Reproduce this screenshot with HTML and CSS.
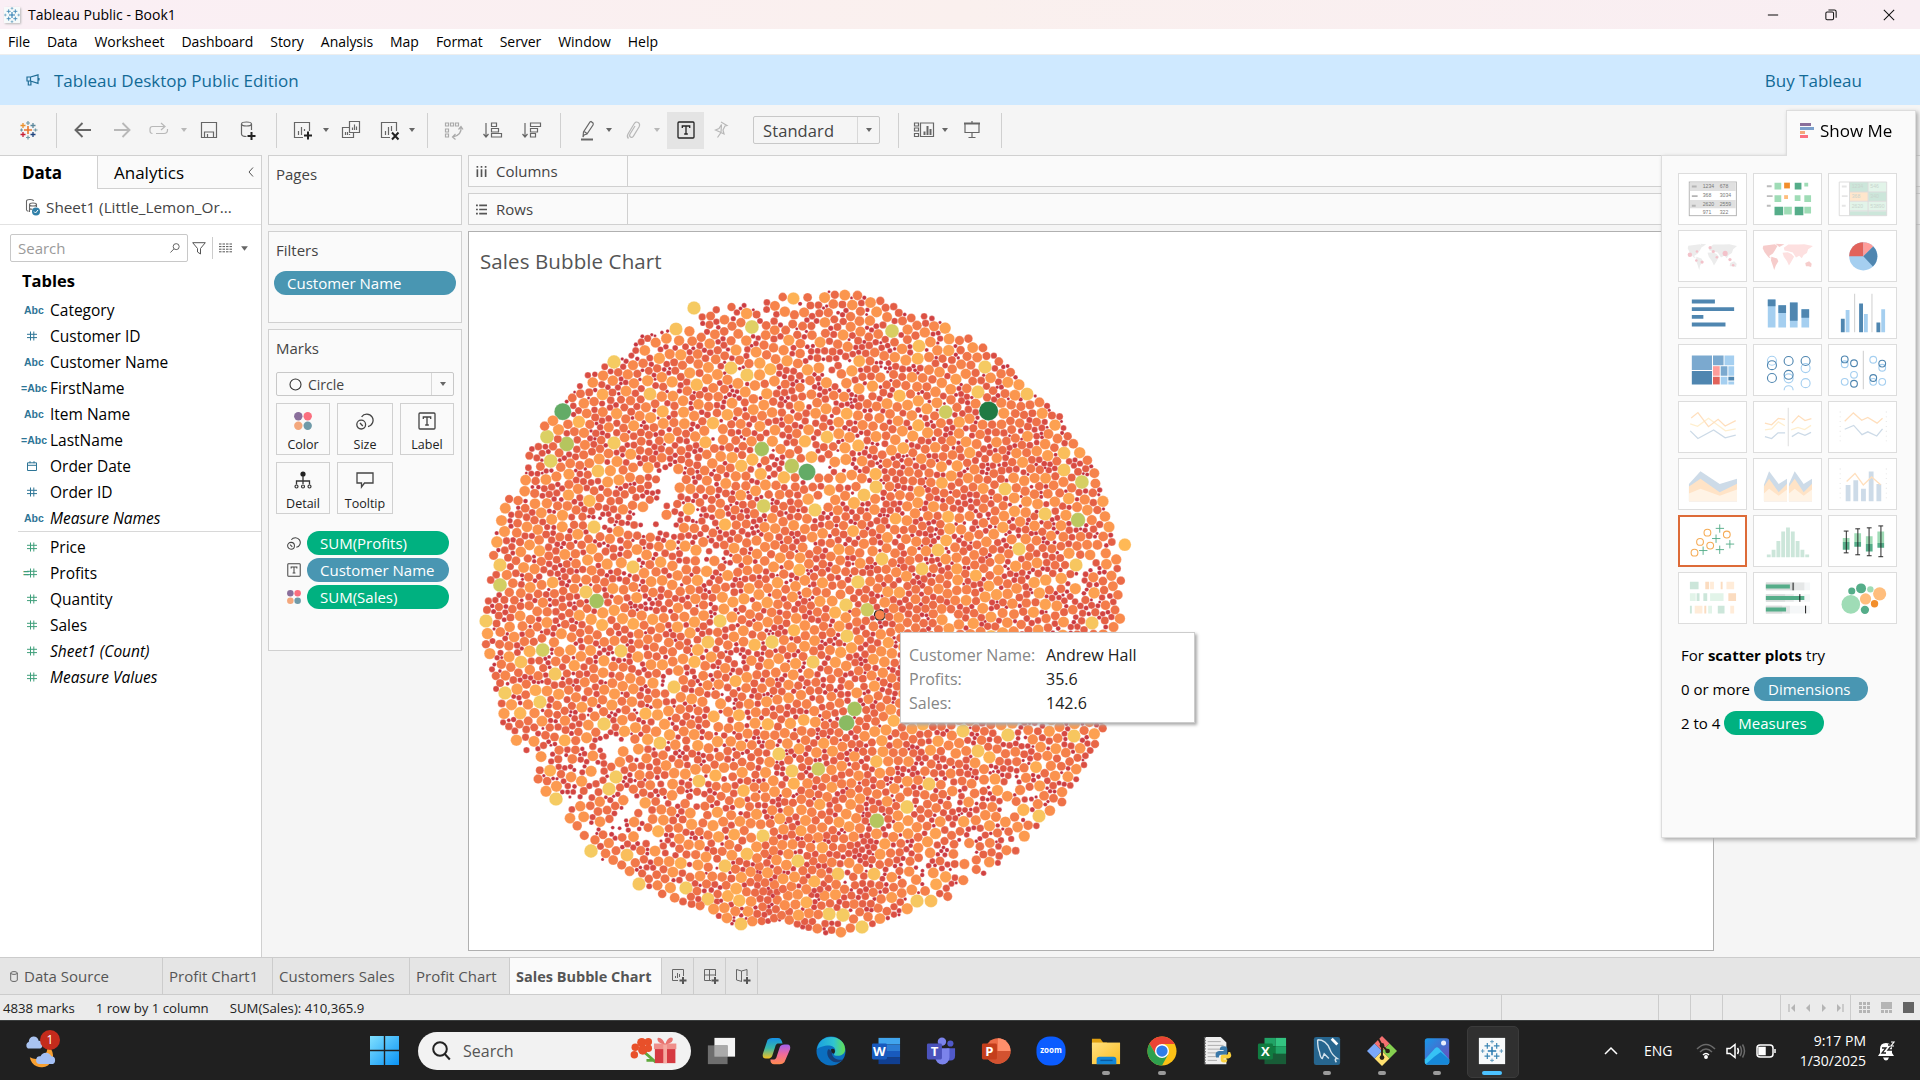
FILE: index.html
```html
<!DOCTYPE html>
<html lang="en">
<head>
<meta charset="utf-8">
<title>Tableau Public - Book1</title>
<link rel="stylesheet" href="styles.css">
</head>
<body>
<svg class="sprite" width="0" height="0">
  <defs>
    <linearGradient id="gWin" x1="0" y1="0" x2="1" y2="1"><stop offset="0" stop-color="#80e0ff"/><stop offset="1" stop-color="#0a93f5"/></linearGradient>
    <linearGradient id="gEdge" x1="0" y1="0" x2="1" y2="0"><stop offset="0" stop-color="#1a9fe0"/><stop offset=".6" stop-color="#30c4d0"/><stop offset="1" stop-color="#63e050"/></linearGradient>
    <linearGradient id="gCopA" x1="0" y1="0" x2="0" y2="1"><stop offset="0" stop-color="#1590e8"/><stop offset=".5" stop-color="#38b8a8"/><stop offset="1" stop-color="#f5c020"/></linearGradient>
    <linearGradient id="gCopB" x1="0" y1="0" x2="0" y2="1"><stop offset="0" stop-color="#a060f0"/><stop offset=".5" stop-color="#f06a9a"/><stop offset="1" stop-color="#ff8a50"/></linearGradient>
    <linearGradient id="gFold" x1="0" y1="0" x2="1" y2="1"><stop offset="0" stop-color="#ffe080"/><stop offset="1" stop-color="#fbbd20"/></linearGradient>
    <linearGradient id="gPhoto" x1="0" y1="0" x2="1" y2="1"><stop offset="0" stop-color="#1898e8"/><stop offset="1" stop-color="#7048b8"/></linearGradient>
    <symbol id="hash" viewBox="0 0 10 10"><path d="M3.5 .5v9M6.8 .5v9M0 3.3h10M0 6.6h10" fill="none" stroke="currentColor" stroke-width="1"/></symbol>
    <symbol id="tbox" viewBox="0 0 18 18"><rect x="1" y="1" width="16" height="16" rx="1" fill="none" stroke="currentColor" stroke-width="1.3"/><path d="M5.3 7V5h7.4v2M9 5v8M7.2 13h3.6" fill="none" stroke="currentColor" stroke-width="1.3"/></symbol>
    <symbol id="size" viewBox="0 0 18 18"><circle cx="5.2" cy="12.6" r="4.4" fill="none" stroke="currentColor" stroke-width="1.3"/><path d="M4 11l2.8 3M5.6 4.8A6.3 6.3 0 1 1 12 14.6" fill="none" stroke="currentColor" stroke-width="1.3"/></symbol>
    <symbol id="dots" viewBox="0 0 18 18"><circle cx="4.3" cy="4.3" r="4.2" fill="#8a6f9b"/><circle cx="13.7" cy="4.3" r="4.2" fill="#fb6f7f"/><circle cx="4.3" cy="13.7" r="4.2" fill="#f3a77c"/><circle cx="13.7" cy="13.7" r="4.2" fill="#6f9aa8"/></symbol>
    <symbol id="tableau" viewBox="0 0 24 24"><path d="M12 7.5v9M7.5 12h9" stroke="#2a7ab0" stroke-width="1.6"/><path d="M7 3.5v6M4 6.5h6M17 3.5v6M14 6.5h6M7 14.5v6M4 17.5h6M17 14.5v6M14 17.5h6" stroke="#3d87b5" stroke-width="1.3"/><path d="M12 0v4M10 2h4M12 20v4M10 22h4M2 10v4M0 12h4M22 10v4M20 12h4" stroke="#5b98bd"/></symbol>
    <symbol id="caret" viewBox="0 0 8 6"><path d="M1 1h6L4 5z" fill="currentColor"/></symbol>
  </defs>
</svg>

<header class="titlebar">
  <svg class="app-mark" viewBox="0 0 24 24"><use href="#tableau"/></svg>
  <span class="app-title">Tableau Public - Book1</span>
  <div class="win-buttons">
    <svg viewBox="0 0 14 14"><path d="M1 7h12"/></svg>
    <svg viewBox="0 0 14 14"><rect x="1" y="3.5" width="9" height="9" rx="1.5"/><path d="M4 1.2h7a2 2 0 0 1 2 2v7"/></svg>
    <svg viewBox="0 0 14 14"><path d="M1 1l12 12M13 1L1 13"/></svg>
  </div>
</header>

<nav class="menubar"><span>File</span><span>Data</span><span>Worksheet</span><span>Dashboard</span><span>Story</span><span>Analysis</span><span>Map</span><span>Format</span><span>Server</span><span>Window</span><span>Help</span></nav>

<section class="banner">
  <svg class="horn" viewBox="0 0 14 12"><path d="M1 3h3.5v4H1zM4.5 3L12 .8v8.6L4.5 7M2.3 7v4h2.6V7M13 4v2.5" fill="none" stroke="#1f6d96" stroke-width="1.2"/></svg>
  <span>Tableau Desktop Public Edition</span>
  <span class="buy">Buy Tableau</span>
</section>

<div class="toolbar">
  <svg class="ic" viewBox="0 0 24 24"><path d="M12 8v8M8 12h8" stroke="#e8762c" stroke-width="1.6"/><path d="M7 5v5M4.5 7.5h5" stroke="#eb912c" stroke-width="1.3"/><path d="M17 5v5M14.5 7.5h5" stroke="#5b879b" stroke-width="1.3"/><path d="M7 14v5M4.5 16.5h5" stroke="#c72035" stroke-width="1.3"/><path d="M17 14v5M14.5 16.5h5" stroke="#1f447e" stroke-width="1.3"/><path d="M12 3v4M10 5h4M12 17.500v4M10 19.500h4M4 12h3M17.500 12h4M5.500 10.500v3M19.500 10.500v3" stroke="#7199a6"/></svg>
  <i class="sep"></i>
  <svg class="ic bold" viewBox="0 0 24 24"><path d="M20 12H5M11.500 5L4.500 12l7 7"/></svg>
  <svg class="ic bold off" viewBox="0 0 24 24"><path d="M4 12h15M12.500 5l7 7-7 7"/></svg>
  <svg class="ic off" viewBox="0 0 24 24"><path d="M5.500 15.500q-2.500 0-2.500-2.500v-2q0-2.500 2.500-2.500H17M14 5l4 3.500-4 3.500M9 15.500h8q3.500 0 3.500-3.500v-1"/></svg>
  <svg class="ca off"><use href="#caret"/></svg>
  <svg class="ic" viewBox="0 0 24 24"><path d="M4.500 4.500h15v15h-15zM7.500 19v-5h9v5M10.500 19v-3"/></svg>
  <svg class="ic" viewBox="0 0 24 24"><path d="M5.500 6v10c0 1.500 2 2.500 5 2.500M15.500 6v6"/><ellipse cx="10.500" cy="6" rx="5" ry="2"/><path class="dark" d="M15.500 14v8M11.500 18h8"/></svg>
  <i class="sep"></i>
  <svg class="ic" viewBox="0 0 24 24"><path d="M13 19.500H4.500v-15h15V13M8.500 17v-4M11.500 17V9M14.500 13v-2"/><path class="dark" d="M18 13.500v8M14 17.500h8"/></svg>
  <svg class="ca"><use href="#caret"/></svg>
  <svg class="ic" viewBox="0 0 24 24"><path d="M10.500 3.500h10v11h-10zM13.500 12V9.500M15.500 12V6.500M17.500 12V8.500M10 9.500H3.500v10h11V15M6.500 17v-3M8.500 17v-3M10.500 17v-1"/></svg>
  <svg class="ic" viewBox="0 0 24 24"><path d="M13 19.500H4.500v-15h15V13M8.500 17v-4M11.500 17V9M14.500 13V8"/><path class="dark" d="M15 14.500l6.500 7M21.500 14.500l-6.500 7"/></svg>
  <svg class="ca"><use href="#caret"/></svg>
  <i class="sep"></i>
  <svg class="ic mid" viewBox="0 0 24 24"><path d="M4.500 5h3v3h-3zM9.500 5h3v3h-3zM14.500 5h3v3h-3zM4.500 11h3v3h-3zM4.500 16h3v3h-3zM20 9q1 8-8 10M14.500 16L11.500 19l3 2.500M17.500 11.500l2.500-3 2 3"/></svg>
  <svg class="ic" viewBox="0 0 24 24"><path d="M5 5v14M2.500 16L5 19l2.500-3M10.500 5h5v3.500h-5zM10.500 10.500h7V14h-7zM10.500 15.500h10V19h-10z"/></svg>
  <svg class="ic" viewBox="0 0 24 24"><path d="M5 5v14M2.500 16L5 19l2.500-3M10.500 5h10v3.500h-10zM10.500 10.500h7V14h-7zM10.500 15.500h5V19h-5z"/></svg>
  <i class="sep"></i>
  <svg class="ic" viewBox="0 0 24 24"><path d="M16 3.500l2 1.500q.5 1 0 2l-6 9-3 1-1 2 .500-5 6.500-10zM8.500 13l3.500 2.500"/><path class="thick" d="M6 21.500h12"/></svg>
  <svg class="ca"><use href="#caret"/></svg>
  <svg class="ic off" viewBox="0 0 24 24"><path d="M14 8l-5 8q-1 2 .500 3t2.800-.6L18 9q1.500-3-.800-4.500T13 6l-6 10q-1.500 3 .500 4.500"/></svg>
  <svg class="ca off"><use href="#caret"/></svg>
  <span class="toggle"><svg viewBox="0 0 18 18"><use href="#tbox"/></svg></span>
  <svg class="ic off" viewBox="0 0 24 24"><path d="M12 4l6 3.500-2 .500-2 4 1 4-3-1.500-3.500 5M12 14.500L6.500 12l3.500-1.500 2.500-4z"/></svg>
  <span class="select fit"><span>Standard</span><b><svg class="ca"><use href="#caret"/></svg></b></span>
  <i class="sep"></i>
  <svg class="ic" viewBox="0 0 24 24"><path d="M2.500 5h4v3h-4zM2.500 10h4v3h-4zM2.500 15.500h4v3h-4zM8.500 5h13v13.500h-13z"/><path class="thick" d="M12.500 17v-3.500M15.500 17V8M18.500 17v-6"/></svg>
  <svg class="ca"><use href="#caret"/></svg>
  <svg class="ic" viewBox="0 0 24 24"><path d="M5 6v8.500h14V6M12 15v4.500M8.500 19.500h7M12 3v2"/><path class="thick" d="M4 5.500h16"/></svg>
  <i class="sep"></i>
</div>

<main class="work">
  <aside class="datapane">
    <div class="tabs"><span class="on">Data</span><span class="off-tab">Analytics<svg viewBox="0 0 6 10"><path d="M5 .5L1 5l4 4.500" fill="none" stroke="#555"/></svg></span></div>
    <div class="source">
      <svg viewBox="0 0 18 18"><path d="M3.500 12V3q0-1.500 3.500-1.500T10.500 3M3.500 12q.5 1 2 1.300M6.500 14V6.500q0-1.500 3.500-1.500t3.500 1.500V9M6.500 6.500q0 1.500 3.500 1.500t3.500-1.500M6.500 10q0 1.200 3 1.300" fill="none" stroke="#666" stroke-width="1.100"/><circle cx="13" cy="13.500" r="4" fill="#2f7fa8"/><path d="M11 13.500l1.500 1.500 2.500-3" stroke="#fff" fill="none"/></svg>
      <span>Sheet1 (Little_Lemon_Or...</span>
    </div>
    <div class="searchrow">
      <div class="searchbox"><span>Search</span><svg viewBox="0 0 11 11"><circle cx="6.800" cy="4" r="3.300"/><path d="M4.300 6.500L.5 10.500"/></svg></div>
      <svg class="funnel" viewBox="0 0 14 13"><path d="M.7.7h12.600L8.500 6.500V12L5.500 10V6.500z"/></svg>
      <i></i>
      <svg class="grid" viewBox="0 0 13 10"><path d="M0 1h13M0 3.600h13M0 6.200h13M0 8.800h13" stroke-dasharray="2.500 1"/></svg>
      <svg class="ca"><use href="#caret"/></svg>
    </div>
    <h2>Tables</h2>
    <ul class="fields dims">
      <li><em>Abc</em>Category</li>
      <li><em><svg><use href="#hash"/></svg></em>Customer ID</li>
      <li><em>Abc</em>Customer Name</li>
      <li><em class="calc">=Abc</em>FirstName</li>
      <li><em>Abc</em>Item Name</li>
      <li><em class="calc">=Abc</em>LastName</li>
      <li><em><svg viewBox="0 0 10 10"><path d="M.5 1.800h9v7.700h-9zM.5 4.300h9M3 .2v2M7 .2v2" fill="none" stroke="currentColor"/></svg></em>Order Date</li>
      <li><em><svg><use href="#hash"/></svg></em>Order ID</li>
      <li class="it"><em>Abc</em>Measure Names</li>
    </ul>
    <ul class="fields meas">
      <li><em><svg><use href="#hash"/></svg></em>Price</li>
      <li><em class="calc h">=<svg><use href="#hash"/></svg></em>Profits</li>
      <li><em><svg><use href="#hash"/></svg></em>Quantity</li>
      <li><em><svg><use href="#hash"/></svg></em>Sales</li>
      <li class="it"><em><svg><use href="#hash"/></svg></em>Sheet1 (Count)</li>
      <li class="it"><em><svg><use href="#hash"/></svg></em>Measure Values</li>
    </ul>
  </aside>

  <section class="cards">
    <div class="card pages"><h3>Pages</h3></div>
    <div class="card filters"><h3>Filters</h3><span class="pill blue">Customer Name</span></div>
    <div class="card marks"><h3>Marks</h3>
      <div class="select mark"><svg class="ring" viewBox="0 0 13 13"><circle cx="6.500" cy="6.500" r="5.500"/></svg><span>Circle</span><b><svg class="ca"><use href="#caret"/></svg></b></div>
      <div class="buttons">
        <div><svg><use href="#dots"/></svg>Color</div>
        <div><svg><use href="#size"/></svg>Size</div>
        <div><svg><use href="#tbox"/></svg>Label</div>
        <div><svg viewBox="0 0 18 18"><circle cx="9" cy="3" r="2.600" fill="#222"/><path d="M9 5v8M2.500 13.500V10h13v3.500" fill="none" stroke="#333" stroke-width="1.300"/><g fill="none" stroke="#333" stroke-width="1.200"><circle cx="2.500" cy="15.500" r="1.500"/><circle cx="9" cy="15.500" r="1.500"/><circle cx="15.500" cy="15.500" r="1.500"/></g></svg>Detail</div>
        <div><svg viewBox="0 0 18 18"><path d="M1 2h16v10H8.500L5.500 16v-4H1z" fill="none" stroke="#444" stroke-width="1.300"/></svg>Tooltip</div>
      </div>
      <div class="encodings">
        <svg><use href="#size"/></svg><span class="pill green">SUM(Profits)</span>
        <svg><use href="#tbox"/></svg><span class="pill blue">Customer Name</span>
        <svg><use href="#dots"/></svg><span class="pill green">SUM(Sales)</span>
      </div>
    </div>
  </section>

  <section class="canvas">
    <div class="shelf"><span><svg viewBox="0 0 12 12"><path d="M1.500 0v2M1.500 3.500V12M6 0v2M6 3.500V12M10.500 0v2M10.500 3.500V12"/></svg>Columns</span></div>
    <div class="shelf"><span><svg viewBox="0 0 12 12"><path d="M0 1.500h2M3.500 1.500H12M0 6h2M3.500 6H12M0 10.500h2M3.500 10.500H12"/></svg>Rows</span></div>
    <div class="view">
      <h1>Sales Bubble Chart</h1>
      <svg id="bubbles" class="bubbles" width="680" height="680" viewBox="470 276 680 680"></svg>
      <dl class="tip"><dt>Customer Name:</dt><dd>Andrew Hall</dd><dt>Profits:</dt><dd>35.6</dd><dt>Sales:</dt><dd>142.6</dd></dl>
    </div>
  </section>

  <aside class="showme">
    <div class="head"><svg viewBox="0 0 14 15"><path d="M0 0h11v3H0z" fill="#8a6f9b"/><path d="M0 4h14v3H0z" fill="#7b9fcb"/><path d="M0 8h5v3H0z" fill="#f3a77c"/><path d="M0 12h8v3H0z" fill="#fb6f7f"/></svg>Show Me</div>
    <div class="body">
      <div class="tiles">
        <svg viewBox="84 219 207 156"><rect x="115" y="244" width="147" height="105" fill="#fff" stroke="#b4b4b4" stroke-width="3"/><path d="M117 246h143v26H117zM117 300h143v26H117z" fill="#e0e0e0"/><path d="M123 258h15M123 288h18M123 318h12" stroke="#b4b4b4" stroke-width="6"/><g class="tt"><text x="157" y="264">1234</text><text x="210" y="264">678</text><text x="157" y="292">368</text><text x="210" y="292">3034</text><text x="157" y="319">2620</text><text x="210" y="319">2559</text><text x="157" y="343">971</text><text x="210" y="343">322</text></g></svg>
        <svg viewBox="309 219 207 156"><path d="M348 257h15M348 288h18M348 318h12" stroke="#bcbcbc" stroke-width="6"/><path d="M372 246h21v21h-21zM465 246h12v12h-12zM372 285h21v21h-21zM435 285h18v18h-18zM465 285h21v21h-21zM402 321h24v24h-24zM465 321h21v21h-21z" fill="#9fdcb6"/><path d="M435 246h21v21h-21zM372 321h27v27h-27zM435 321h27v27h-27z" fill="#55ad89"/><path d="M402 246h18v18h-18z" fill="#f28e2b"/><path d="M402 285h12v12h-12z" fill="#ffbe7d"/></svg>
        <svg viewBox="534 219 207 156"><path d="M597 244h58v31h-58zM655 275h58v30h-58zM597 335h116v14H597z" fill="#cce6da"/><path d="M655 244h58v31h-58zM597 305h116v29H597z" fill="#e2f4e9"/><path d="M597 275h58v29h-58z" fill="#ffe6cc"/><path d="M565 244h148v105H565zM597 244v105M655 244v105M597 275h116M597 304h116M597 334h116" fill="none" stroke="#dcdcdc" stroke-width="3"/><path d="M573 258h15M573 288h18M573 318h12" stroke="#e5e5e5" stroke-width="6"/><g class="tt pale"><text x="604" y="264">1234</text><text x="662" y="264">546</text><text x="604" y="294">368</text><text x="662" y="294">340</text><text x="604" y="324">2620</text><text x="662" y="324">53890</text></g></svg>
        <svg viewBox="84 390 207 156"><path d="M112 436l36-5 8 6-8 14-6 9-12 8 6 8-8-4-12-16-6-12zM150 430l18 1-12 9zM137 470l16 6 4 8-8 14-3 14-5-16-5-14zM172 458l16-2 12 6 8 8-10 18-6 10-6-14-10-14zM176 442l14-10 30 0 20-1 24 6-12 10-4 12-10 6-6 10-8-8-10 6-10-16-14-4-12-2zM243 490l12-6 8 8-2 10-12-2-8 0z" fill="#ececec"/><g fill="#f3c2ca"><circle cx="117" cy="464" r="7"/><circle cx="227" cy="460" r="8"/><circle cx="180" cy="442" r="5"/><circle cx="190" cy="454" r="5"/><circle cx="155" cy="487" r="5"/><circle cx="137" cy="482" r="4"/><circle cx="242" cy="479" r="5"/><circle cx="201" cy="472" r="4"/><circle cx="252" cy="497" r="4"/><circle cx="139" cy="454" r="4"/></g></svg>
        <svg viewBox="309 390 207 156"><path d="M337 436l36-5 8 6-8 14-6 9-12 8 6 8-8-4-12-16-6-12zM375 430l28 1-16 9zM362 470l18 6 4 8-8 14-5 14-5-16-5-14zM468 490l12-6 8 8-2 10-8-2-8 0z" fill="#f6cccb"/><path d="M397 458l16-2 12 6 8 8-10 18-6 10-6-14-10-14zM401 442l14-10 30 0 20-1 27 6-15 10-4 12-10 6-6 10-8-8-10 6-10-16-14-4-12-2z" fill="#fde0e0"/></svg>
        <svg viewBox="534 390 207 156"><circle cx="640" cy="469" r="44" fill="#a5cff0"/><path d="M640 469V425a44 44 0 0 0-44 44z" fill="#e2635b"/><path d="M640 469V425a44 44 0 0 1 31 13z" fill="#ff9d9a"/><path d="M640 469l31-31a44 44 0 0 1-1 63z" fill="#4f86b0"/></svg>
        <svg viewBox="84 561 207 156"><path d="M123 597h72v12h-72zM123 621h132v12H123zM123 645h36v12h-36zM123 669h105v12H123z" fill="#4f86b0"/></svg>
        <svg viewBox="309 561 207 156"><path d="M351 597h24v87h-24zM384 615h24v69h-24zM420 606h24v78h-24zM456 627h24v57h-24z" fill="#a5cff0"/><path d="M351 597h24v21h-24zM384 615h24v24h-24zM420 606h24v57h-24zM456 627h24v27h-24z" fill="#4f86b0"/></svg>
        <svg viewBox="534 561 207 156"><path d="M613 579v120M667 579v120" stroke="#ccc" stroke-width="3"/><path d="M585 630h12v69h-12zM642 642h12v57h-12zM696 627h12v72h-12z" fill="#a5cff0"/><path d="M570 657h12v42h-12zM627 609h12v90h-12zM681 669h12v30h-12z" fill="#4f86b0"/></svg>
        <svg viewBox="84 732 207 156"><path d="M123 765h63v45h-63zM189 765h33v30h-33zM213 798h21v30h-21z" fill="#7ba9cf"/><path d="M123 813h63v42h-63zM237 831h18v12h-18z" fill="#4f86b0"/><path d="M225 765h30v30h-30zM237 798h18v30h-18zM213 831h21v24h-21zM237 846h18v9h-18z" fill="#a5cff0"/><path d="M189 798h21v30h-21z" fill="#ff9d9a"/><path d="M189 831h21v24h-21z" fill="#e2635b"/></svg>
        <svg viewBox="309 732 207 156"><g fill="none" stroke-width="3.500"><g stroke="#a5cff0"><circle cx="364" cy="781" r="14"/><circle cx="416" cy="836" r="14"/><circle cx="469" cy="804" r="14"/><circle cx="469" cy="851" r="14"/><path d="M402 873a14 14 0 0 1 28 0"/></g><g stroke="#4f86b0"><circle cx="364" cy="795" r="14"/><circle cx="364" cy="835" r="14"/><circle cx="416" cy="782" r="14"/><circle cx="416" cy="825" r="14"/><circle cx="469" cy="782" r="14"/></g></g></svg>
        <svg viewBox="534 732 207 156"><path d="M640 750v120" stroke="#ccc" stroke-width="3"/><g fill="none" stroke-width="3.500"><g stroke="#a5cff0"><circle cx="582" cy="792" r="10.500"/><circle cx="611" cy="825" r="10.500"/><circle cx="582" cy="847" r="10.500"/><circle cx="671" cy="778" r="10.500"/><circle cx="699" cy="803" r="10.500"/><circle cx="671" cy="847" r="10.500"/><circle cx="699" cy="847" r="10.500"/></g><g stroke="#4f86b0"><circle cx="582" cy="777" r="10.500"/><circle cx="611" cy="789" r="10.500"/><circle cx="611" cy="853" r="10.500"/><circle cx="699" cy="790" r="10.500"/><circle cx="671" cy="835" r="10.500"/></g></g></svg>
        <svg class="ln" viewBox="84 903 207 156"><path class="y" d="M118 971l23 8 34-25 53 39 32-6"/><path class="o" d="M121 953l21-17 33 44 30-23 22 21 33-17"/><path class="b" d="M118 993l24 24 49-27 36 25 33-9"/></svg>
        <svg class="ln" viewBox="309 903 207 156"><path d="M415 921v120" stroke="#e5e5e5" stroke-width="3"/><path class="y" d="M342 990l21-3 21-22 20 12M424 990l21-8 21 7 20-13"/><path class="o" d="M342 969l21 5 21-20 21 3M426 969l21-23 20 15 20-6"/><path class="b" d="M342 1011l21 6 20-18h22M426 1011l20-12 21 8 19-9"/></svg>
        <svg class="ln" viewBox="534 903 207 156"><path d="M568 933v94M712 933v94" stroke="#e5e5e5" stroke-width="9" stroke-dasharray="2.500 12.500"/><path class="o" d="M582 963l27-26 26 23 19-9 29 18 17-15"/><path class="b" d="M582 988l28-12 26 29 18-9 28 13 18-22"/></svg>
        <svg viewBox="84 1074 207 156"><path d="M114 1152l36-40 60 40 54-16v70H114z" fill="#cddbe8"/><path d="M114 1160l36-24 60 42 54-27v55H114z" fill="#ffe3c6"/><path d="M114 1182l36-15 60 22 54-20v37H114z" fill="#fff3e5"/></svg>
        <svg viewBox="309 1074 207 156"><path d="M339 1154l16-42 30 40 26-16v70h-72zM417 1152l18-40 28 40 26-16v70h-72z" fill="#cddbe8"/><path d="M339 1160l16-24 30 42 26-27v55h-72zM417 1160l18-24 28 42 26-27v55h-72z" fill="#ffe3c6"/><path d="M339 1182l16-15 30 22 26-20v37h-72zM417 1182l18-15 28 22 26-20v37h-72z" fill="#fff3e5"/></svg>
        <svg class="ln" viewBox="534 1074 207 156"><path d="M568 1104v94M712 1104v94" stroke="#e5e5e5" stroke-width="9" stroke-dasharray="2.500 12.500"/><path d="M585 1155h15v51h-15zM609 1140h15v66h-15zM633 1167h15v39h-15zM657 1113h15v93h-15zM681 1152h15v54h-15z" fill="#cddbe8"/><path class="o" d="M588 1144l26-25 26 36 26-25 28 24"/></svg>
        <svg class="chosen" viewBox="84 75 207 156"><g fill="none" stroke="#f5ab55" stroke-width="3.500"><circle cx="129" cy="191" r="11"/><circle cx="147" cy="156" r="11"/><circle cx="171" cy="126" r="11"/><circle cx="180" cy="168" r="11"/><circle cx="234" cy="132" r="11"/></g><path d="M198 112h27M211 99v27M186 145h27M199 132v27M231 163h27M244 150v27M144 184h27M157 171v27M198 181h27M211 168v27" stroke="#55ad89" stroke-width="3"/></svg>
        <svg viewBox="309 75 207 156"><path d="M348 195h12v9h-12zM363 180h12v24h-12zM378 153h12v51h-12zM393 123h12v81h-12zM408 111h12v93h-12zM423 123h12v81h-12zM438 153h12v51h-12zM453 180h12v24h-12zM468 195h12v9h-12z" fill="#cce6da"/></svg>
        <svg viewBox="534 75 207 156"><path d="M576 144h21v12h-21zM612 129h21v27h-21zM648 138h21v24h-21zM684 123h21v36h-21z" fill="#9fdcb6"/><path d="M576 156h21v24h-21zM612 156h21v15h-21zM648 162h21v24h-21zM684 159h21v15h-21z" fill="#55ad89"/><path d="M587 122v68M579 122h15M579 190h15M623 115v81M615 115h15M615 196h15M658 112v87M651 112h15M651 199h15M695 106v96M687 106h15M687 202h15" stroke="#222" stroke-width="3"/></svg>
        <svg viewBox="84 246 207 156"><path d="M117 273h27v24h-27zM138 309h9v24h-9zM159 309h12v24h-12zM117 348h6v24h-6zM204 348h21v24h-21z" fill="#cce6da"/><path d="M117 309h18v24h-18zM180 309h42v24h-42zM174 348h12v24h-12z" fill="#e2f4e9"/><path d="M165 273h12v24h-12zM213 273h6v24h-6zM237 309h24v24h-24zM162 348h6v24h-6z" fill="#fbdcc0"/><path d="M180 273h12v24h-12zM231 273h24v24h-24zM132 348h24v24h-24zM243 348h12v24h-12z" fill="#ffecd9"/></svg>
        <svg viewBox="309 246 207 156"><path d="M345 276h138v24H345zM345 312h138v24H345zM345 348h138v24H345z" fill="#f5f7f8"/><path d="M345 276h120v24H345zM345 312h87v24h-87zM345 348h75v24h-75z" fill="#e5e7e7"/><path d="M345 276h90v24h-90zM345 312h60v24h-60zM345 348h51v24h-51z" fill="#d8dcdb"/><path d="M345 282h75v12h-75zM345 318h120v12H345zM345 354h63v12h-63z" fill="#55ad89"/><path d="M430 276v24M451 312v24M469 348v24" stroke="#111" stroke-width="3"/></svg>
        <svg viewBox="534 246 207 156"><g fill="#55ad89"><circle cx="604" cy="302" r="11"/><circle cx="633" cy="294" r="15.500"/><circle cx="645" cy="361" r="13"/></g><g fill="#9fdcb6"><circle cx="601" cy="344" r="29"/><circle cx="662" cy="297" r="10"/></g><g fill="#ffbe7d"><circle cx="647" cy="327" r="17.500"/><circle cx="691" cy="311" r="20.500"/></g><circle cx="675" cy="342" r="11.500" fill="#f28e2b"/></svg>
      </div>
      <p class="hint">For <strong>scatter plots</strong> try</p>
      <p>0 or more <span class="pill blue">Dimensions</span></p>
      <p>2 to 4 <span class="pill green">Measures</span></p>
    </div>
  </aside>
</main>

<div class="sheets">
  <span class="ds"><svg viewBox="0 0 8 11"><ellipse cx="4" cy="2" rx="3.300" ry="1.400"/><path d="M.7 2v7q0 1.500 3.300 1.500T7.300 9V2"/></svg>Data Source</span><span>Profit Chart1</span><span>Customers Sales</span><span>Profit Chart</span><span class="on">Sales Bubble Chart</span>
  <span class="new"><svg viewBox="0 0 16 16"><path d="M7 12.500H1.500v-11h11V8M4.500 10V8M6.500 10V5M8.500 9V6"/><path class="plus" d="M12 9v7M8.500 12.500h7"/></svg></span>
  <span class="new"><svg viewBox="0 0 16 16"><path d="M8 12.500H1.500v-11h11V8M6.500 1.500v11M1.500 7h11"/><path class="plus" d="M12 9v7M8.500 12.500h7"/></svg></span>
  <span class="new"><svg viewBox="0 0 16 16"><path d="M7 13.500L1.500 12V1.500L6.500 3l5.500-1.500V8M6.500 3v10"/><path class="plus" d="M12 9v7M8.500 12.500h7"/></svg></span>
</div>

<div class="status">
  <span>4838 marks</span><span>1 row by 1 column</span><span>SUM(Sales): 410,365.9</span>
  <div class="cells"><i></i><i></i><i></i><i></i>
    <div class="nav"><svg viewBox="0 0 10 10"><path d="M2 1v8" stroke="#b5b5b5" stroke-width="1.200"/><path d="M8 1v8L4 5z"/></svg><svg viewBox="0 0 10 10"><path d="M7 1v8L3 5z"/></svg><svg viewBox="0 0 10 10"><path d="M3 1v8l4-4z"/></svg><svg viewBox="0 0 10 10"><path d="M8 1v8" stroke="#b5b5b5" stroke-width="1.200"/><path d="M2 1v8l4-4z"/></svg></div>
    <div class="modes"><svg viewBox="0 0 11 11"><path d="M0 0h3v3H0zM4 0h3v3H4zM8 0h3v3H8zM0 4h3v3H0zM4 4h3v3H4zM8 4h3v3H8zM0 8h3v3H0zM4 8h3v3H4zM8 8h3v3H8z"/></svg><svg viewBox="0 0 11 11"><path d="M0 0h11v7H0zM0 8h3v3H0zM4 8h3v3H4zM8 8h3v3H8z"/></svg><svg viewBox="0 0 11 11"><path d="M0 0h11v11H0z" fill="#646464"/></svg></div>
  </div>
</div>

<footer class="taskbar">
  <div class="weather"><svg viewBox="0 0 36 36"><path d="M24 13a12 12 0 1 1-18 12a12 12 0 0 0 18-12z" fill="#f7a032"/><path d="M4 16a4 4 0 0 1 1-7 5 5 0 0 1 10-1 4 4 0 0 1 0 8z" fill="#a9c3f0"/><path d="M16 32a4 4 0 0 1 1-8 6 6 0 0 1 11 0 4 4 0 0 1 0 8z" fill="#a4c0f5"/></svg><b>1</b></div>
  <svg class="start" viewBox="0 0 29 29"><path d="M0 0h13.800v13.800H0zM15.200 0H29v13.800H15.200zM0 15.200h13.800V29H0zM15.200 15.200H29V29H15.200z" fill="url(#gWin)"/></svg>
  <div class="find"><svg viewBox="0 0 20 20"><circle cx="9" cy="8" r="6.800"/><path d="M13.800 13l5 5.500"/></svg><span>Search</span>
    <svg class="gift" viewBox="0 0 50 30"><path d="M12 13l16 14M18 25l8 0" stroke="#5fa83c" stroke-width="3"/><g fill="#e8502a"><circle cx="6" cy="11" r="4"/><circle cx="13" cy="6" r="5"/><circle cx="20" cy="5" r="4"/><circle cx="14" cy="14" r="5"/><circle cx="5" cy="19" r="4"/><circle cx="20" cy="12" r="4"/></g><path d="M27 8h22v20H27z" fill="#d63a42"/><path d="M26 7h24v6H26z" fill="#ef8f8a"/><path d="M36 8h4v20h-4z" fill="#f5a9a0"/><path d="M38 8q-10-2-8-7q5-1 8 7q3-9 8-7q2 5-8 7" fill="#e8736f"/></svg></div>
  <div class="apps">
    <span><svg viewBox="0 0 32 32"><path d="M9 2h22v20H9z" fill="#f4f4f4"/><path d="M2 10h21v20H2z" fill="#777" opacity=".9"/><path d="M9 10h14v12H9z" fill="#aaa"/></svg></span>
    <span><svg viewBox="0 0 32 32"><path d="M7 4q2-2 5-2h6q4 0 5 6h-5q-2 0-3 4l-3 9q-1 3-5 3H5q-4 0-3-5z" fill="url(#gCopA)"/><path d="M25 28q-2 2-5 2h-6q-4 0-4-5h4q2 0 3-4l3-9q1-3 5-3h3q4 0 3 5z" fill="url(#gCopB)"/></svg></span>
    <span><svg viewBox="0 0 32 32"><circle cx="16" cy="16" r="15.500" fill="#0b6fc0"/><path d="M1 14C3 4 10 1 16 1c9 0 15 6 15 13 0 5-4 7-8 7-5 0-4-2-3-3 2-4-1-8-6-8-6 0-11 2-13 4z" fill="url(#gEdge)"/><path d="M13 14c-3 5 1 13 8 14 4 0 7-1 8-3-5 1-12-1-12-7 0-2-2-4-4-4z" fill="#173f78"/><path d="M16 14q3-1 4 1 1 2-1 4-3-1-3-5z" fill="#202020"/></svg></span>
    <span><svg viewBox="0 0 32 32"><path d="M8 2h23v7H8z" fill="#41a5ee"/><path d="M8 9h23v7H8z" fill="#2b7cd3"/><path d="M8 16h23v7H8z" fill="#185abd"/><path d="M8 23h23v7H8z" fill="#103f91"/><rect x="1" y="8" width="16" height="17" rx="1.500" fill="#185abd"/><text x="9" y="21.500">W</text></svg></span>
    <span><svg viewBox="0 0 32 32"><circle cx="17" cy="6" r="4.500" fill="#7b83eb"/><circle cx="26" cy="8" r="3.300" fill="#5059c9"/><path d="M22 13h9v8q0 5-5 5h-4z" fill="#5059c9"/><path d="M10 13h15v10a7 7 0 0 1-15 0z" fill="#7b83eb"/><rect x="1" y="8" width="16" height="17" rx="1.500" fill="#4b53bc"/><text x="9" y="21.500">T</text></svg></span>
    <span><svg viewBox="0 0 32 32"><circle cx="18" cy="16" r="13.500" fill="#ed6c47"/><path d="M18 2.500A13.500 13.500 0 0 1 31.500 16H18z" fill="#ff8f6b"/><path d="M4.500 16h27a13.500 13.500 0 0 1-27 0z" fill="#d35230"/><rect x="1" y="8" width="16" height="17" rx="1.500" fill="#c43e1c"/><text x="9" y="21.500">P</text></svg></span>
    <span><svg viewBox="0 0 32 32"><rect x=".5" y=".5" width="31" height="31" rx="14" fill="#0b5cff"/><text class="zm" x="16" y="18.500">zoom</text></svg></span>
    <span class="run"><svg viewBox="0 0 32 32"><path d="M1 3h9l3 4h4v6H1z" fill="#e0a010"/><path d="M1 7h30v23H1z" fill="url(#gFold)"/><path d="M6 30v-5q0-3 3-3h15q3 0 3 3v5z" fill="#1286d8"/><path d="M10 26h13" stroke="#0a5aa0" stroke-width="1.500"/></svg></span>
    <span class="run"><svg viewBox="0 0 32 32"><circle cx="16" cy="16" r="15.500" fill="#fbc116"/><path d="M2.600 8.200A15.500 15.500 0 0 1 29.500 8.500H16L9.500 19.700z" fill="#ea4335"/><path d="M2.600 8.200A15.500 15.500 0 0 0 16 31.500L22.500 19.700H9.500z" fill="#2fa04e"/><circle cx="16" cy="16" r="7.500" fill="#fff"/><circle cx="16" cy="16" r="6" fill="#2f7de8"/></svg></span>
    <span><svg viewBox="0 0 32 32"><path d="M3 1h17l6 6v23H3z" fill="#eee"/><path d="M6 6h14M6 10h17M6 14h17M6 18h10M6 22h9M6 26h10" stroke="#aaa"/><path d="M3 1v29" stroke="#555" stroke-width="2" stroke-dasharray="1.500 1.500"/><path d="M22 11q5-1 5 3v4q0 2-2 2h-5q-2 0-2 3h-3q-2-6 3-7h5v-1h-4q0-4 3-4z" fill="#3a78a8"/><path d="M25 28q-5 1-5-3v-3q0-2 2-2h4q2 0 2-3h2q3 6-2 7h-5v1h4q0 3-2 3z" fill="#f8cf3c"/></svg></span>
    <span><svg viewBox="0 0 32 32"><path d="M8 2h12v9H8z" fill="#21a366"/><path d="M20 2h11v9H20z" fill="#33c481"/><path d="M8 11h23v8H8z" fill="#107c41"/><path d="M20 11h11v8H20z" fill="#21a366"/><path d="M8 19h23v11H8z" fill="#185c37"/><rect x="1" y="8" width="16" height="17" rx="1.500" fill="#107c41"/><text x="9" y="21.500">X</text></svg></span>
    <span class="run"><svg viewBox="0 0 32 32"><rect x="2" y="1" width="28" height="30" rx="2.500" fill="#27668f"/><path d="M6 4q9 0 13 10 2 6 8 10-4 0-1 4M6 4q0 9 2 13 1 7 3 7l2-5 5 5" fill="none" stroke="#d3e2ec" stroke-width="1.500"/><path d="M21 3l6 6" stroke="#fff" stroke-width="3"/></svg></span>
    <span class="run"><svg viewBox="0 0 32 32"><path d="M16 0l8 8-8 8-8-8z" fill="#f47070"/><path d="M24 8l8 8-8 8-8-8z" fill="#85d050"/><path d="M16 16l8 8-8 8-8-8z" fill="#ffe070"/><path d="M8 8l8 8-8 8-8-8z" fill="#7aa8f8"/><path d="M12 3l4 7v13M16 10l6 6" stroke="#2b2018" stroke-width="2" fill="none"/><circle cx="16" cy="10" r="2.500" fill="#2b2018"/><circle cx="22" cy="16" r="2.500" fill="#2b2018"/><circle cx="16" cy="23" r="2.500" fill="#2b2018"/></svg></span>
    <span class="run"><svg viewBox="0 0 32 32"><rect x="3" y="2.500" width="26" height="28" rx="3" fill="url(#gPhoto)"/><path d="M3 25l11-12q2-2 4 0l11 12v3q0 2.500-3 2.500H6q-3 0-3-2.500z" fill="#36c2f5"/><path d="M13 22l-9 8q1 .5 2 .5h20q3 0 3-2.500v-3l-9-8z" fill="#1688d8"/><circle cx="23" cy="7.500" r="2.700" fill="#e8eefc"/></svg></span>
    <span class="active"><svg viewBox="0 0 32 32"><path d="M2 2h28v28H2z" fill="#f7f9fa"/><use href="#tableau" x="4" y="4" width="24" height="24"/></svg></span>
  </div>
  <div class="tray">
    <svg class="up" viewBox="0 0 14 9"><path d="M1 8l6-6 6 6"/></svg>
    <span>ENG</span>
    <svg class="wifi" viewBox="0 0 20 16"><path d="M1 6q9-9 18 0M4 9q6-6 12 0" stroke="#6a6a6a"/><path d="M7 12q3-3 6 0"/><circle cx="10" cy="14" r="1.200" fill="#fff"/></svg>
    <svg class="vol" viewBox="0 0 20 16"><path d="M1 5.500h3L9 1.500v13L4 10.500H1zM11.500 5q2 3 0 6"/><path d="M14 3q3 5 0 10M16.500 1.500q4 6.500 0 13" stroke="#6a6a6a"/></svg>
    <svg class="bat" viewBox="0 0 21 14"><rect x="1" y="1" width="16" height="12" rx="3"/><path d="M3 3.500h6v7H3z" fill="#fff"/><path d="M19 5v4"/></svg>
    <div class="clock">9:17 PM<br>1/30/2025</div>
    <svg class="bell" viewBox="0 0 18 20"><path d="M1 15l2-3V8q0-6 6-6t6 6v4l2 3zM6 16.500h6q-1 3-3 3t-3-3z" fill="#fff" stroke="none"/><path d="M5 7h4l-4 5h4" stroke="#222" stroke-width="1.300"/><path d="M11 4h4l-4 5h4" stroke="#222" stroke-width="1.300"/><path d="M14 1h3l-3 4h3" stroke-width="1.200"/></svg>
  </div>
</footer>
<script src="chart.js"></script>
</body>
</html>
```
FILE: styles.css
```css
* { box-sizing: border-box; }
body { margin: 0; width: 1920px; height: 1080px; overflow: hidden; display: flex; flex-direction: column; background: #f5f5f5; color: #000; font: 15.5px "Open Sans", "Noto Sans", sans-serif; }
svg { display: block; overflow: visible; flex: none; }
ul, dl, p, h1, h2, h3 { margin: 0; padding: 0; }
span { white-space: nowrap; }
.sprite { position: absolute; }

.titlebar { height: 29px; flex: none; display: flex; align-items: center; background: linear-gradient(90deg, #faeff5, #faf0ee 50%, #f9eef3); }
.app-mark { width: 16px; height: 16px; margin-left: 4px; background: #f6fafa; box-shadow: 1px 1px 2px #b9b9b9; }
.app-title { margin-left: 8px; font-size: 14px; }
.win-buttons { margin-left: auto; display: flex; gap: 46px; padding-right: 25px; }
.win-buttons svg { width: 12px; height: 12px; fill: none; stroke: #111; stroke-width: 1.2; }
.menubar { height: 26px; flex: none; display: flex; align-items: center; gap: 17px; padding-left: 8px; background: #fff; border-bottom: 1px solid #eee; font-size: 14px; letter-spacing: -.05px; }
.banner { height: 50px; flex: none; display: flex; align-items: center; background: #cfe9ff; color: #126a96; font-size: 17px; }
.horn { width: 14px; height: 12px; margin: 0 14px 0 26px; }
.buy { margin: 0 58px 0 auto; }

.toolbar { height: 50px; flex: none; padding-left: 16px; display: grid; align-items: center; justify-items: start; grid-template-columns: 40px 15px 39px 37px 33px 17px 39px 40px 14px 32px 17px 38px 31px 19px 14px 40px 39px 40px 15px 30px 16px 32px 14px 42px 44px 145px 14px 29px 19px 41px 1px; }
.ic { width: 24px; height: 24px; fill: none; stroke: #666; stroke-width: 1.2; }
.ic.bold { stroke-width: 1.9; }
.ic.off { stroke: #b8b8b8; }
.ic.mid { stroke: #aaa; }
.ic .dark { stroke: #222; stroke-width: 2; }
.ic .thick { stroke-width: 2; }
.ca { width: 8px; height: 6px; color: #666; }
.ca.off { color: #b8b8b8; }
.sep { width: 1px; height: 35px; background: #d0d0d0; }
.toggle { width: 37px; height: 37px; background: #e4e4e4; display: grid; place-items: center; color: #222; }
.toggle svg { width: 18px; height: 18px; }
.select { display: flex; align-items: center; border: 1px solid #c8c8c8; border-radius: 2px; color: #444; }
.select b { margin-left: auto; align-self: stretch; width: 22px; display: grid; place-items: center; border-left: 1px solid #d8d8d8; }
.select.fit { width: 127px; height: 28px; padding-left: 9px; font-size: 16.5px; letter-spacing: .1px; }

.work { height: 802px; flex: none; display: flex; }
.datapane { width: 262px; background: #fff; border-right: 1px solid #d0d0d0; border-top: 1px solid #d0d0d0; }
.tabs { display: flex; height: 33px; font-size: 17px; }
.tabs span { display: flex; align-items: center; }
.tabs .on { width: 97px; padding-left: 22px; font-weight: 700; letter-spacing: -.2px; }
.off-tab { flex: 1; padding: 0 7px 0 16px; background: #fafafa; border-left: 1px solid #d0d0d0; border-bottom: 1px solid #d0d0d0; justify-content: space-between; }
.off-tab svg { width: 6px; height: 10px; }
.source { height: 36px; display: flex; align-items: center; padding-left: 23px; gap: 5px; color: #444; border-bottom: 1px solid #e2e2e2; }
.source svg { width: 18px; height: 18px; }
.source span { font-size: 15.3px; }
.searchrow { display: flex; align-items: center; margin-top: 9px; padding-left: 10px; height: 28px; }
.searchbox { width: 178px; height: 28px; border: 1px solid #c8c8c8; border-radius: 2px; display: flex; align-items: center; justify-content: space-between; padding: 0 7px; color: #9a9a9a; font-size: 15px; }
.searchrow svg { fill: none; stroke: #555; }
.searchbox svg { width: 10px; height: 10px; }
.funnel { width: 14px; height: 13px; margin-left: 4px; }
.searchrow i { width: 1px; height: 22px; background: #ccc; margin: 0 6px; }
.grid { width: 13px; height: 10px; }
.searchrow .ca { margin-left: 8px; stroke: none; width: 9px; height: 7px; }
.datapane h2 { font-size: 16.5px; line-height: 26px; padding-left: 22px; margin-top: 6px; height: 29px; }
.fields { list-style: none; }
.fields li { height: 26px; display: flex; align-items: center; padding-left: 50px; }
.fields em { width: 34px; margin-left: -34px; font: 700 10.5px "Liberation Sans", sans-serif; color: #2e7596; display: flex; align-items: center; justify-content: flex-start; padding-left: 8px; }
.fields em.calc { padding-left: 5px; }
.fields em svg { width: 10px; height: 10px; margin-left: 3px; }
.fields em.h { padding-left: 7px; }
.fields em.h svg { margin-left: -2px; }
.meas em { color: #3f9f7b; }
.fields .it { font-style: italic; }
.meas { margin: 0 0 0 18px; border-top: 1px solid #d8d8d8; padding-top: 2px; }
.meas li { padding-left: 32px; }
.dims { padding-bottom: 0; }

.cards { width: 194px; margin-left: 6px; display: flex; flex-direction: column; gap: 6px; }
.card { border: 1px solid #d0d0d0; background: #fafafa; padding: 7px 5px; color: #333; }
.card h3 { font-weight: 400; font-size: 15px; line-height: 22px; padding-left: 2px; color: #444; }
.pages { height: 70px; }
.filters { height: 92px; }
.marks { height: 322px; padding-left: 7px; }
.marks h3 { padding-left: 0; }
.pill { display: block; height: 24px; line-height: 24px; border-radius: 12px; color: #fff; padding: 0 13px; font-size: 15px; font-weight: 500; }
.blue { background: #4996b2; }
.green { background: #00b180; }
.filters .pill { margin-top: 10px; width: 182px; margin-left: 0; }
.select.mark { width: 178px; height: 24px; margin-top: 13px; padding-left: 12px; font-size: 14px; gap: 6px; }
.ring { width: 13px; height: 13px; fill: none; stroke: #333; stroke-width: 1.1; }
.buttons { display: grid; grid-template-columns: 54px 56px 54px; column-gap: 7px; row-gap: 7px; margin-top: 7px; }
.buttons div { height: 52px; border: 1px solid #d0d0d0; display: flex; flex-direction: column; align-items: center; padding-top: 8px; gap: 6px; font-size: 12.5px; line-height: 17px; color: #222; }
.buttons svg { width: 18px; height: 18px; color: #444; }
.encodings { display: grid; grid-template-columns: 31px 142px; row-gap: 3px; align-items: center; margin-top: 17px; }
.encodings svg { width: 14px; height: 14px; margin-left: 11px; color: #444; }

.canvas { width: 1452px; margin-left: 6px; display: flex; flex-direction: column; }
.shelf { height: 32px; margin-bottom: 6px; border: 1px solid #d0d0d0; border-right: 0; background: #fafafa; display: flex; flex: none; }
.shelf span { width: 159px; border-right: 1px solid #d0d0d0; display: flex; align-items: center; gap: 9px; padding-left: 7px; font-size: 15px; color: #444; }
.shelf svg { width: 11px; height: 11px; stroke: #555; stroke-width: 1.8; }
.view { position: relative; width: 1246px; height: 720px; background: #fff; border: 1px solid #b0b0b0; display: flex; flex-direction: column; }
.view h1 { font-size: 20.5px; font-weight: 400; color: #555; line-height: 28px; padding: 15px 0 0 11px; letter-spacing: .1px; height: 44px; }
.bubbles { margin-left: 1px; }
.bubbles circle { stroke: #fff; stroke-opacity: .35; stroke-width: .8; }
.bubbles .picked { stroke: #222; stroke-opacity: 1; stroke-width: 1.2; }
.tip { position: absolute; left: 431px; top: 400px; width: 295px; height: 91px; background: #fff; border: 1px solid #ccc; box-shadow: 2px 2px 3px #aaa; display: grid; grid-template-columns: 137px auto; grid-auto-rows: 24px; padding: 10px 8px; font-size: 16px; line-height: 24px; }
.tip dt { color: #868686; }
.tip dd { margin: 0; color: #222; }

.showme { width: 255px; margin: -45px 0 0 -259px; height: 728px; display: flex; flex-direction: column; position: relative; filter: drop-shadow(2px 2px 2px #a8a8a8); }
.head { align-self: flex-end; width: 130px; height: 46px; margin-bottom: -1px; position: relative; background: #fafafa; border: 1px solid #ddd; border-bottom: 0; display: flex; align-items: center; gap: 6px; padding: 0 0 6px 13px; font-size: 17px; padding-bottom: 7px; }
.head svg { width: 14px; height: 15px; }
.body { flex: 1; background: #fafafa; border: 1px solid #ddd; padding: 17px 0 0 16px; }
.tiles { display: grid; grid-template-columns: repeat(3, 69px); grid-auto-rows: 52px; gap: 5px 6px; }
.tiles > svg { width: 69px; height: 52px; background: #fff; border: 1px solid #ddd; overflow: hidden; }
.tiles > .chosen { border: 2px solid #dd6b38; }
.tt text { font: 16px "Liberation Sans", sans-serif; fill: #777; }
.pale text { fill: #c9d4ce; }
.ln path { fill: none; stroke-width: 4; }
.ln path[fill] { fill: #cddbe8; }
.ln .y { stroke: #ffefcf; }
.ln .o { stroke: #ffdfbd; }
.ln .b { stroke: #ccdae7; }
.body p { display: flex; align-items: center; gap: 4px; margin: 10px 0 0 3px; height: 24px; font-size: 15px; }
.body .hint { margin-top: 19px; }
.body .pill { padding: 0 17px 0 14px; }

.sheets { height: 38px; flex: none; display: flex; background: #e5e5e5; border: solid #ccc; border-width: 1px 0; color: #555; font-size: 15px; }
.sheets span { display: flex; align-items: center; border-right: 1px solid #ccc; padding: 0 0 0 6px; }
.sheets span:nth-child(1) { width: 163px; padding-left: 10px; gap: 6px; }
.sheets span:nth-child(2) { width: 110px; }
.sheets span:nth-child(3) { width: 137px; }
.sheets span:nth-child(4) { width: 100px; }
.sheets .on { width: 152px; background: #fafafa; font-weight: 700; font-size: 14.5px; }
.sheets .new { width: 32px; padding-left: 9px; }
.sheets svg { width: 16px; height: 16px; fill: none; stroke: #666; }
.sheets .ds svg { width: 8px; height: 11px; }
.plus { stroke-width: 2; stroke: #555; }
.status { height: 25px; flex: none; display: flex; align-items: center; gap: 21px; background: #ebebeb; padding-left: 3px; font-size: 13.2px; color: #222; }
.cells { margin-left: auto; align-self: stretch; display: flex; }
.cells > * { border-left: 1px solid #ccc; }
.cells i:nth-child(1) { width: 157px; }
.cells i:nth-child(2), .cells i:nth-child(3) { width: 32px; }
.cells i:nth-child(4) { width: 58px; }
.nav { width: 70px; display: flex; align-items: center; gap: 6px; padding-left: 6px; }
.nav svg { width: 10px; height: 10px; fill: #b5b5b5; }
.modes { width: 70px; display: flex; align-items: center; gap: 11px; padding-left: 8px; }
.modes svg { width: 11px; height: 11px; fill: #b5b5b5; }

.taskbar { height: 60px; flex: none; background: #202020; border-top: 1px solid #3a3d3d; display: flex; align-items: center; color: #fff; }
.weather { width: 40px; height: 40px; margin-left: 24px; position: relative; }
.weather svg { width: 35px; height: 35px; margin-top: 2px; }
.weather b { position: absolute; left: 16px; top: -1px; width: 20px; height: 20px; border-radius: 50%; background: #c42b1c; display: grid; place-items: center; font-size: 12px; font-weight: 400; }
.start { width: 29px; height: 29px; margin-left: 306px; }
.find { width: 273px; height: 38px; margin-left: 19px; border-radius: 19px; background: #f2f2f2; display: flex; align-items: center; padding: 0 13px; color: #555; font-size: 16px; }
.find svg { width: 20px; height: 20px; fill: none; stroke: #222; stroke-width: 2; margin-right: 12px; }
.find .gift { width: 50px; height: 28px; margin: 0 0 0 auto; stroke: none; }
.apps { display: flex; margin-left: 2.500px; }
.apps span { width: 55.07px; height: 50px; display: grid; place-items: center; position: relative; }
.apps svg { width: 30px; height: 30px; z-index: 1; }
.apps text { font: 700 14px "Open Sans", sans-serif; fill: #fff; text-anchor: middle; }
.apps .zm { font-size: 8.5px; }
.run::after, .active::after { content: ""; position: absolute; left: 23.500px; bottom: 1px; width: 8px; height: 4px; border-radius: 2px; background: #9a9a9a; }
.active::after { left: 17.500px; width: 20px; background: #4cc2ff; }
.active::before { content: ""; position: absolute; left: 2.500px; top: 0; width: 50px; height: 50px; border-radius: 5px; background: #303030; border: 1px solid #3b3b3b; }
.tray { margin-left: auto; width: 316px; display: flex; align-items: center; font-size: 14px; }
.tray svg { fill: none; stroke: #fff; stroke-width: 1.5; }
.up { width: 14px; height: 9px; }
.tray span { margin-left: 26px; width: 44px; font-size: 14px; }
.wifi { width: 20px; height: 16px; margin-left: 8px; }
.vol { width: 20px; height: 16px; margin-left: 10px; }
.bat { width: 21px; height: 14px; margin-left: 10px; }
.clock { width: 84px; margin-left: 5px; text-align: right; line-height: 20px; font-size: 14px; }
.bell { width: 18px; height: 20px; margin-left: 11px; }
```
FILE: chart.js
```js
// Packed bubbles: size encodes SUM(Profits), colour encodes SUM(Sales).
const MARKS = 4838, CX = 806, CY = 613;

// Named large bubbles: x, y, radius, colour.
const large = [
  [988.6,412,9.7,'#1f7a43'],[562.8,412.7,8.6,'#63ab66'],[807,473,8.6,'#63ab66'],[761.8,450,7.4,'#a5c25e'],
  [791.8,467,7.4,'#bcc75f'],[566.7,445,7.5,'#b5c55e'],[1078,521,7.4,'#bcc860'],[1081.9,483,7,'#d6cf62'],
  [945.7,413,7,'#cfcc60'],[596.6,602,7.5,'#a5c25e'],[867.2,610.7,7,'#cdca60'],[879.8,616,5.4,'#f8834c'],
  [500,586,7,'#d2ce62'],[547,437.7,7,'#dbd063'],[550.7,462,7,'#e4d163'],[892,332,7,'#d8ce62'],
  [751.9,328,7,'#e0d064'],[763.6,507,7,'#d8ce62'],[854.6,710,7.5,'#a5c25e'],[846.6,723.9,8,'#8aba62'],
  [876.8,821.7,7.5,'#b5c55e'],[818.3,770,7,'#cdca60'],[542.7,651,7,'#d2ce62'],[1124.8,545.7,6.4,'#ffb955']
];
// Mid-range yellow bubbles.
const yellow = [694,309,676,330,614,363,731,369,747,376,650,395,919,347,985,368,978,393,827,438,876,488,864,496,
  1005,490,1045,515,1076,566,486,622,500,566,1064,454,1064,471,1027,395,598,472,586,593,720,622,938,551,882,560,
  922,570,858,583,1092,624,614,444,594,528,815,511,846,606,633,568,1019,550,660,744,763,837,741,925,829,915,843,
  916,838,875,874,875,798,862,747,855,725,867,779,755,792,772,616,778,609,790,604,725,555,675,708,643,772,643,
  813,663,847,637,929,785,907,808,963,732,1074,737,1008,736,978,752,1039,817,917,902,931,902,591,852,639,885,708,
  900,686,889,627,856,621,652,521,663,540,703,556,800,862,928,674,688,699,782,505,694];
// Outermost bubbles, which give the cluster its ragged rim.
const rim = [816,292,762,297,694,309,666,324,630,348,614,363,586,377,563,413,533,438,516,485,503,512,493,559,
  491,597,486,622,485,641,497,680,501,717,518,746,536,776,545,793,561,811,584,834,591,852,632,874,639,885,666,896,
  713,910,721,917,741,925,781,918,807,927,843,934,862,928,897,913,944,900,969,882,990,876,1020,847,1031,828,1054,
  813,1082,773,1092,750,1105,723,1113,680,1124,625,1114,607,1122,579,1118,552,1108,537,1110,522,1104,502,1099,482,
  1084,455,1062,432,1057,415,1027,395,1008,371,993,358,979,346,953,332,934,322,906,313,897,305,873,301,858,295,836,295];

let seed = 20250130;
const rnd = () => {
  seed = (seed + 0x6D2B79F5) | 0;
  let t = Math.imul(seed ^ (seed >>> 15), 1 | seed);
  t = (t + Math.imul(t ^ (t >>> 7), 61 | t)) ^ t;
  return ((t ^ (t >>> 14)) >>> 0) / 4294967296;
};

const edge = [];
for (let i = 0; i < rim.length; i += 2) {
  const dx = rim[i] - CX, dy = rim[i + 1] - CY;
  edge.push([Math.atan2(dy, dx), Math.hypot(dx, dy)]);
}
edge.sort((a, b) => a[0] - b[0]);
const reach = new Float32Array(720);
for (let k = 0; k < 720; k++) {
  const a = -Math.PI + k * Math.PI / 360;
  let j = edge.findIndex(e => e[0] > a);
  if (j < 0) j = 0;
  const p = edge[(j + edge.length - 1) % edge.length], q = edge[j];
  let span = q[0] - p[0], off = a - p[0];
  if (span < 0) span += 2 * Math.PI;
  if (off < 0) off += 2 * Math.PI;
  reach[k] = p[1] + (q[1] - p[1]) * Math.min(1, off / span) + 4.6;
}

const stops = [[1.5,190,45,62],[2.4,201,56,64],[3.2,217,76,67],[4,229,96,69],[4.7,240,116,73],[5.3,249,138,76],
  [5.8,253,158,80],[6.3,254,180,85],[6.8,245,203,98]];
const tint = r => {
  let i = 1;
  while (i < stops.length - 1 && r > stops[i][0]) i++;
  const a = stops[i - 1], b = stops[i], t = Math.max(0, Math.min(1, (r - a[0]) / (b[0] - a[0])));
  return `rgb(${[1, 2, 3].map(n => Math.round(a[n] + (b[n] - a[n]) * t)).join()})`;
};

const nodes = large.map(([x, y, r, c]) => ({ x, y, r, c, fixed: true }));
for (let i = 0; i < yellow.length; i += 2) {
  const r = 6.5 + rnd() * .4;
  nodes.push({ x: yellow[i], y: yellow[i + 1], r, c: tint(r), fixed: true });
}
while (nodes.length < MARKS) {
  const a = rnd() * 2 * Math.PI, d = Math.sqrt(rnd()) * 316, u = rnd();
  const r = u > .985 ? 6 + rnd() * .4 : 1.5 + 4.45 * Math.pow(u, .92);
  nodes.push({ x: CX + Math.cos(a) * d, y: CY + Math.sin(a) * d, r, c: tint(r), fixed: false });
}

const CELL = 18, W = 42;
for (let step = 0; step < 170; step++) {
  const grid = new Map();
  nodes.forEach((n, i) => {
    n.i = i;
    n.g = ((n.y - 250) / CELL | 0) * W + ((n.x - 440) / CELL | 0);
    const list = grid.get(n.g);
    if (list) list.push(n); else grid.set(n.g, [n]);
  });
  for (const n of nodes) {
    for (const o of [-W - 1, -W, -W + 1, -1, 0, 1, W - 1, W, W + 1]) {
      const list = grid.get(n.g + o);
      if (!list) continue;
      for (const m of list) {
        if (m.i <= n.i) continue;
        const dx = m.x - n.x, dy = m.y - n.y, s = n.r + m.r + .1, d2 = dx * dx + dy * dy;
        if (d2 >= s * s || (n.fixed && m.fixed)) continue;
        const d = Math.sqrt(d2) || .01, push = (s - d) / d * .9;
        const wn = n.fixed ? 0 : m.fixed ? 1 : m.r / (n.r + m.r), wm = 1 - wn;
        n.x -= dx * push * wn; n.y -= dy * push * wn;
        m.x += dx * push * wm; m.y += dy * push * wm;
      }
    }
    if (n.fixed) continue;
    const dx = n.x - CX, dy = n.y - CY, d = Math.hypot(dx, dy) || 1;
    const k = Math.floor((Math.atan2(dy, dx) + Math.PI) * 360 / Math.PI) % 720;
    const lim = reach[k] - n.r;
    if (d > lim) { n.x = CX + dx * lim / d; n.y = CY + dy * lim / d; }
  }
}

document.getElementById('bubbles').innerHTML = nodes.map((n, i) =>
  `<circle cx="${n.x.toFixed(1)}" cy="${n.y.toFixed(1)}" r="${n.r.toFixed(2)}" fill="${n.c}"${i === 11 ? ' class="picked"' : ''}/>`).join('');
```
